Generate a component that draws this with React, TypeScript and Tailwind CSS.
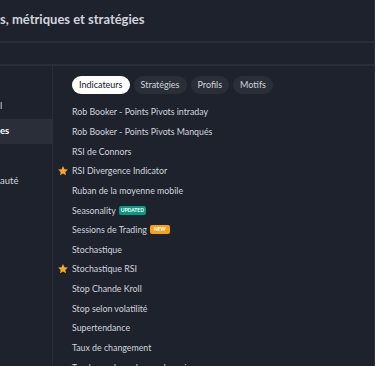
import React from "react";

const items: { name: string; star?: boolean; badge?: "updated" | "new" }[] = [
  { name: "Rob Booker - Points Pivots intraday" },
  { name: "Rob Booker - Points Pivots Manqués" },
  { name: "RSI de Connors" },
  { name: "RSI Divergence Indicator", star: true },
  { name: "Ruban de la moyenne mobile" },
  { name: "Seasonality", badge: "updated" },
  { name: "Sessions de Trading", badge: "new" },
  { name: "Stochastique" },
  { name: "Stochastique RSI", star: true },
  { name: "Stop Chande Kroll" },
  { name: "Stop selon volatilité" },
  { name: "Supertendance" },
  { name: "Taux de changement" },
  { name: "Tendance des volumes des prix" },
];

const tabs = ["Indicateurs", "Stratégies", "Profils", "Motifs"];

const Star = () => (
  <svg width="12" height="12" viewBox="0 0 24 24" className="absolute left-[-15px] top-1/2 -translate-y-1/2">
    <path
      d="M12 2.2l2.9 6.3 6.9.7-5.2 4.6 1.5 6.8L12 17.1l-6.1 3.5 1.5-6.8L2.2 9.2l6.9-.7z"
      fill="#f9a825"
    />
  </svg>
);

export default function App() {
  return (
    <div
      className="w-[375px] h-[366px] overflow-hidden bg-[#1e222d] text-[#d1d4dc] flex flex-col border-r border-[#2a2e39]"
      style={{ fontFamily: "Lato, 'Open Sans', sans-serif" }}
    >
      {/* header */}
      <div className="h-[41px] flex items-center shrink-0">
        <h1 className="text-[13px] font-bold leading-none whitespace-nowrap mb-[2px]">
          s, métriques et stratégies
        </h1>
      </div>
      <div className="h-[25px] border-t-2 border-b-2 border-[#2a2e39] shrink-0" />

      <div className="flex flex-1 min-h-0">
        {/* sidebar */}
        <div className="w-[53px] shrink-0 border-r border-[#2a2e39] pt-[28px] text-[9.5px]">
          <div className="h-[25px] flex items-center whitespace-nowrap">l</div>
          <div className="h-[25px] flex items-center bg-[#2a2e39] font-bold text-white whitespace-nowrap">es</div>
          <div className="h-[25px]" />
          <div className="h-[25px] flex items-center whitespace-nowrap">auté</div>
        </div>

        {/* content */}
        <div className="flex-1 pl-[19px] pt-[10px]">
          <div className="flex gap-[4px] text-[9px]">
            {tabs.map((t, i) => (
              <div
                key={t}
                className={
                  i === 0
                    ? "h-[18px] px-[7px] rounded-full bg-white text-[#131722] flex items-center"
                    : "h-[18px] px-[7px] rounded-full bg-[#2a2e39] text-[#d1d4dc] flex items-center"
                }
              >
                {t}
              </div>
            ))}
          </div>
          <div className="mt-[8px] text-[8.8px]">
            {items.map((it) => (
              <div key={it.name} className="relative h-[19.67px] flex items-center gap-[2px] whitespace-nowrap">
                {it.star && <Star />}
                <span>{it.name}</span>
                {it.badge === "updated" && (
                  <span className="ml-[1px] px-[2px] h-[9px] rounded-[2px] bg-[#089981] text-white text-[5px] font-bold flex items-center leading-none">
                    UPDATED
                  </span>
                )}
                {it.badge === "new" && (
                  <span className="ml-[1px] px-[4px] h-[9px] rounded-[2px] bg-[#f7a21b] text-white text-[5px] font-bold flex items-center leading-none">
                    NEW
                  </span>
                )}
              </div>
            ))}
          </div>
        </div>
      </div>
    </div>
  );
}
